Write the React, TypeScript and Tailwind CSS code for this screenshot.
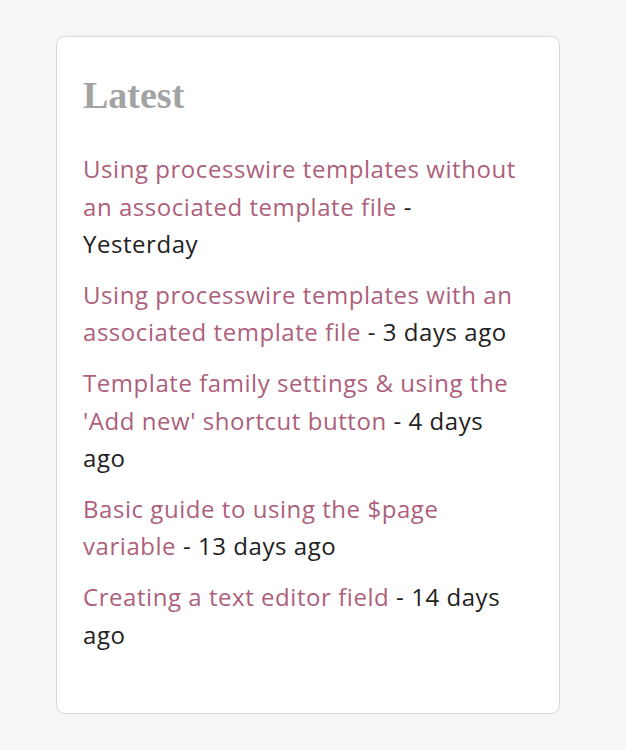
import React from "react";

const items = [
  { title: "Using processwire templates without an associated template file", when: "Yesterday" },
  { title: "Using processwire templates with an associated template file", when: "3 days ago" },
  { title: "Template family settings & using the 'Add new' shortcut button", when: "4 days ago" },
  { title: "Basic guide to using the $page variable", when: "13 days ago" },
  { title: "Creating a text editor field", when: "14 days ago" },
];

export default function App() {
  return (
    <div className="min-h-[750px] w-[626px] bg-[#f6f6f6] pt-[36px] pl-[56px]">
      <div className="w-[504px] rounded-[9px] border border-[#d8d8d8] bg-white pl-[26px] pr-[36px] pt-[26px] pb-[60px]">
        <h2
          className="mt-[8px] mb-[31px] text-[38px] leading-[48px] font-bold text-[#a3a3a3]"
          style={{ fontFamily: '"Liberation Serif", "DejaVu Serif", serif' }}
        >
          Latest
        </h2>
        <ul className="flex flex-col gap-[13px]" style={{ fontFamily: '"Open Sans", "Noto Sans", sans-serif' }}>
          {items.map((it) => (
            <li key={it.title} className="text-[24px] leading-[37.6px] tracking-[0.55px] text-[#222222]">
              <a href="#" className="text-[#ad5f7c]">{it.title}</a> - {it.when}
            </li>
          ))}
        </ul>
      </div>
    </div>
  );
}
